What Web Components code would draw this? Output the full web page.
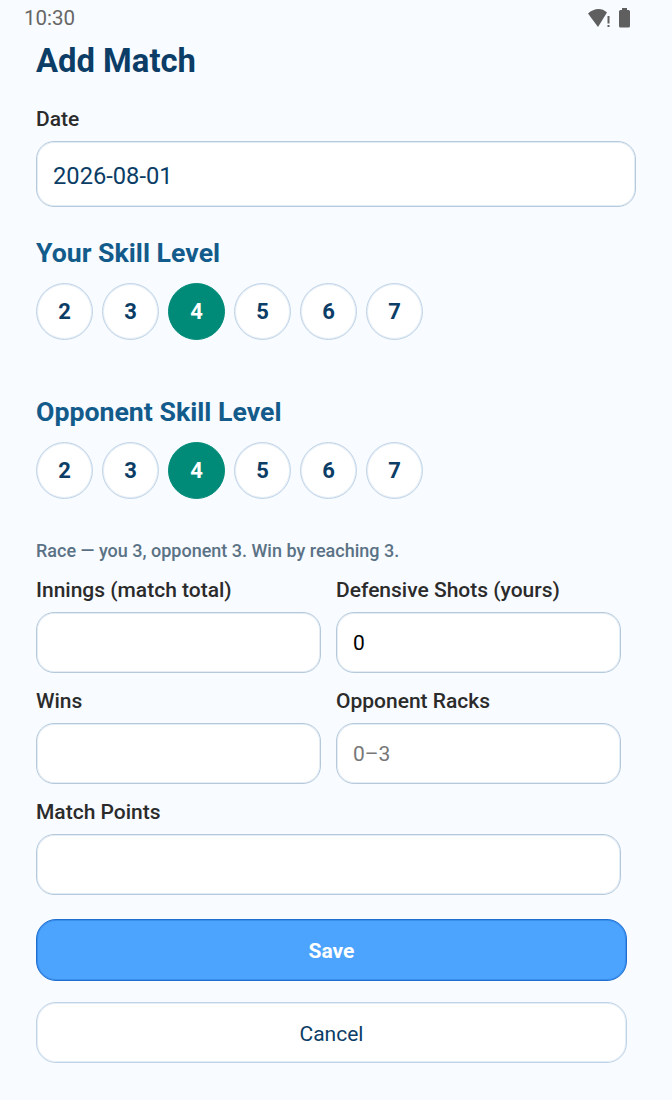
<!DOCTYPE html>
<html>
<head>
<meta charset="utf-8">
<title>Add Match</title>
<style>
  html, body { margin: 0; padding: 0; background: #f8fbff; font-family: Roboto, sans-serif; }
  .form-grid { display: grid; grid-template-columns: 285px 285px; column-gap: 15px; row-gap: 15px; }
  .form-grid .wide { grid-column: 1 / 3; }
</style>
</head>
<body>
<template id="status-bar-tpl">
  <style>
    :host { display: flex; justify-content: space-between; align-items: center; height: 36px; padding: 0 42px 0 24px; color: #666; font-size: 20.5px; }
    svg { display: block; }
    .icons { display: flex; gap: 9px; align-items: center; }
  </style>
  <span>10:30</span>
  <div class="icons">
    <!-- wifi with exclamation -->
    <svg width="22" height="20" viewBox="0 0 22 20">
      <path d="M0 5.500C3 2.500 7 1 10.500 1c3 0 6 1 8.500 3.500L10 19Z" fill="#5f5f5f"/>
      <rect x="19.500" y="8" width="2" height="7.500" fill="#5f5f5f"/>
      <rect x="19.500" y="17" width="2" height="2" fill="#5f5f5f"/>
    </svg>
    <svg width="11" height="20" viewBox="0 0 11 20">
      <path d="M3 0h5v2h1.500A1.500 1.500 0 0 1 11 3.500V18a1.500 1.500 0 0 1-1.500 1.500h-8A1.500 1.500 0 0 1 0 18V3.500A1.500 1.500 0 0 1 1.500 2H3Z" fill="#5f5f5f"/>
    </svg>
  </div>
</template>

<template id="form-page-tpl">
  <style>
    :host { display: block; padding: 0 36px; }
    h1 { margin: 0; padding-top: 1px; height: 47px; font-size: 32.800px; line-height: 48px; font-weight: 700; color: #0b3d66; }
  </style>
  <h1><slot name="title"></slot></h1>
  <slot></slot>
</template>

<template id="form-field-tpl">
  <style>
    :host { display: block; }
    label { display: block; font-size: 21px; line-height: 26px; font-weight: 500; color: #2b2b2b; margin-bottom: 9px; }
    .box { box-sizing: border-box; height: var(--box-h, 61px); display: flex; align-items: center; padding: 0 16px; background: #fff; border: 1px solid #b4c9dc; box-shadow: inset 0 0 0 1px rgba(180, 201, 220, .35); border-radius: 18px; font-size: 21px; color: #000; }
    :host([placeholder]) .box { color: #777; }
    :host([big]) .box { --box-h: 66px; padding-top: 3px; font-size: 23.700px; color: #0b3d66; }
  </style>
  <label></label>
  <div class="box"><slot></slot></div>
</template>

<template id="skill-picker-tpl">
  <style>
    :host { display: block; }
    h2 { margin: 0 0 13px; font-size: 26.700px; line-height: 34px; font-weight: 700; color: #125b8a; }
    .row { display: flex; gap: 9px; }
    .ball { box-sizing: border-box; width: 57px; height: 57px; border-radius: 50%; background: #fff; border: 1px solid #bfd3e7; box-shadow: inset 0 0 0 1px rgba(191, 211, 231, .4); display: flex; align-items: center; justify-content: center; font-size: 22px; font-weight: 700; color: #0b3d66; }
    .ball.on { background: #008a78; border-color: #008a78; box-shadow: none; color: #fff; }
  </style>
  <h2></h2>
  <div class="row"></div>
</template>

<template id="app-button-tpl">
  <style>
    :host { display: flex; box-sizing: border-box; width: 591px; height: 61px; padding-top: 2px; align-items: center; justify-content: center; border-radius: 20px; background: #fff; border: 1px solid #bfd3e7; box-shadow: inset 0 0 0 1px rgba(191, 211, 231, .4); color: #0b3d66; font-size: 21px; }
    :host([primary]) { height: 62px; background: #4ca4ff; border-color: #1f6fd0; box-shadow: inset 0 0 0 1px rgba(31, 111, 208, .4); color: #fff; font-weight: 700; }
  </style>
  <slot></slot>
</template>

<status-bar></status-bar>
<form-page>
  <span slot="title">Add Match</span>
  <form-field big label="Date" style="margin-top: 22px">2026-08-01</form-field>
  <skill-picker label="Your Skill Level" value="4" style="margin-top: 29px"></skill-picker>
  <skill-picker label="Opponent Skill Level" value="4" style="margin-top: 55px"></skill-picker>
  <div style="margin-top: 41px; font-size: 18px; line-height: 22px; font-weight: 500; color: #5b7285">Race — you 3, opponent 3. Win by reaching 3.</div>
  <div class="form-grid" style="margin-top: 15px">
    <form-field label="Innings (match total)"></form-field>
    <form-field label="Defensive Shots (yours)">0</form-field>
    <form-field label="Wins"></form-field>
    <form-field placeholder label="Opponent Racks">0–3</form-field>
    <form-field class="wide" label="Match Points"></form-field>
  </div>
  <app-button primary style="margin-top: 24px">Save</app-button>
  <app-button style="margin-top: 21px">Cancel</app-button>
</form-page>

<script>
function stamp(el, id) {
  const root = el.attachShadow({ mode: 'open' });
  root.appendChild(document.getElementById(id).content.cloneNode(true));
  return root;
}

class StatusBar extends HTMLElement {
  constructor() { super(); stamp(this, 'status-bar-tpl'); }
}

class FormPage extends HTMLElement {
  constructor() { super(); stamp(this, 'form-page-tpl'); }
}

class FormField extends HTMLElement {
  constructor() { super(); stamp(this, 'form-field-tpl'); }
  connectedCallback() {
    this.shadowRoot.querySelector('label').textContent = this.getAttribute('label');
  }
}

class SkillPicker extends HTMLElement {
  constructor() { super(); stamp(this, 'skill-picker-tpl'); }
  connectedCallback() {
    this.shadowRoot.querySelector('h2').textContent = this.getAttribute('label');
    const row = this.shadowRoot.querySelector('.row');
    row.innerHTML = '';
    [2, 3, 4, 5, 6, 7].forEach(n => {
      const ball = document.createElement('div');
      ball.className = 'ball' + (String(n) === this.getAttribute('value') ? ' on' : '');
      ball.textContent = n;
      row.appendChild(ball);
    });
  }
}

class AppButton extends HTMLElement {
  constructor() { super(); stamp(this, 'app-button-tpl'); }
}

customElements.define('status-bar', StatusBar);
customElements.define('form-page', FormPage);
customElements.define('form-field', FormField);
customElements.define('skill-picker', SkillPicker);
customElements.define('app-button', AppButton);
</script>
</body>
</html>
